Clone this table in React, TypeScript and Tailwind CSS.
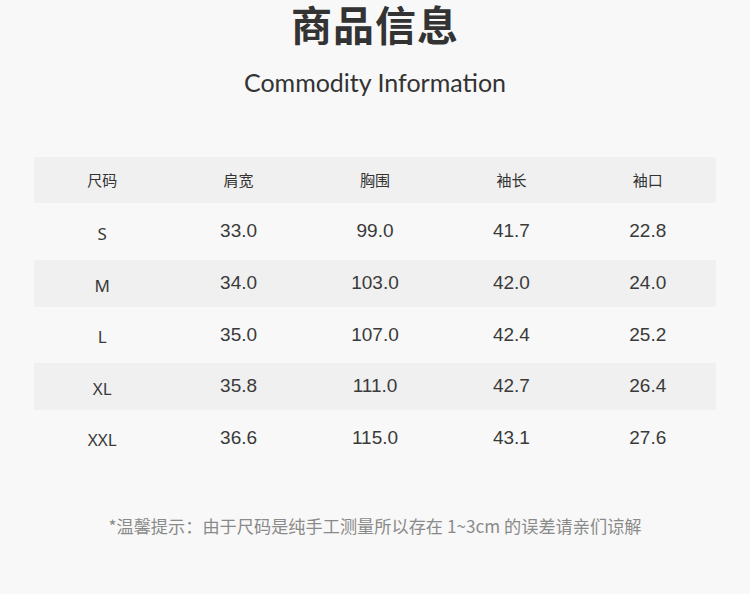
import React from "react";

const cjk = '"Noto Sans CJK SC", "Noto Sans", sans-serif';

const rows = [
  ["S", "33.0", "99.0", "41.7", "22.8"],
  ["M", "34.0", "103.0", "42.0", "24.0"],
  ["L", "35.0", "107.0", "42.4", "25.2"],
  ["XL", "35.8", "111.0", "42.7", "26.4"],
  ["XXL", "36.6", "115.0", "43.1", "27.6"],
];

const heights = ["h-[57px]", "h-[47px]", "h-[56px]", "h-[47px]", "h-[56px]"];

export default function App() {
  return (
    <div className="w-[750px] h-[594px] bg-[#f8f8f8] flex flex-col items-center overflow-hidden" style={{ fontFamily: cjk }}>
      <div className="text-[41px] leading-[46px] font-bold text-[#333333] tracking-[1px]">商品信息</div>
      <div className="mt-[20px] text-[25px] leading-[32px] text-[#333333]" style={{ fontFamily: 'Lato, sans-serif' }}>
        Commodity Information
      </div>
      <div className="mt-[59px] w-[682px] flex flex-col">
        <div className="h-[46px] bg-[#f0f0f0] grid grid-cols-5 items-center text-[15px] text-[#333333]">
          {["尺码", "肩宽", "胸围", "袖长", "袖口"].map((h) => (
            <div key={h} className="text-center">{h}</div>
          ))}
        </div>
        {rows.map((r, i) => (
          <div
            key={r[0]}
            className={`${heights[i]} ${i % 2 === 1 ? "bg-[#f0f0f0]" : ""} grid grid-cols-5 items-center text-[#3a3a3a]`}
          >
            <div className="text-center text-[17px] pt-[4px]" style={{ fontFamily: '"Noto Sans", sans-serif' }}>{r[0]}</div>
            {r.slice(1).map((v, j) => (
              <div key={j} className="text-center text-[19px]" style={{ fontFamily: '"Liberation Sans", sans-serif' }}>{v}</div>
            ))}
          </div>
        ))}
      </div>
      <div className="mt-[47px] text-[17.2px] text-[#8a8a8a]">*温馨提示：由于尺码是纯手工测量所以存在 1~3cm 的误差请亲们谅解</div>
    </div>
  );
}
